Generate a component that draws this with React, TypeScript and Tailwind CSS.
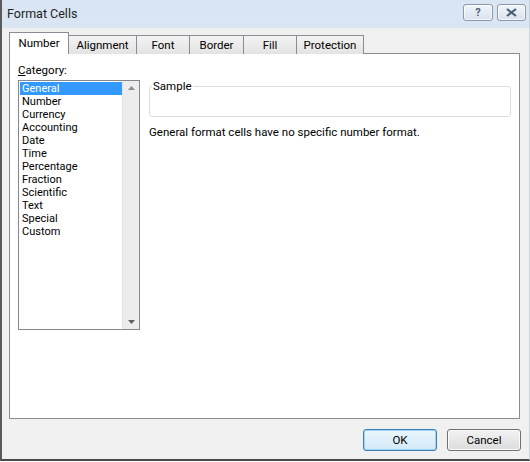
import React from "react";

const items = [
  "General",
  "Number",
  "Currency",
  "Accounting",
  "Date",
  "Time",
  "Percentage",
  "Fraction",
  "Scientific",
  "Text",
  "Special",
  "Custom",
];

const tabs = [
  { label: "Alignment", w: "w-[68px]" },
  { label: "Font", w: "w-[53px]" },
  { label: "Border", w: "w-[54px]" },
  { label: "Fill", w: "w-[53px]" },
  { label: "Protection", w: "w-[67px]" },
];

export default function App() {
  return (
    <div className="w-[530px] h-[462px] bg-white font-['Roboto',sans-serif] text-[11.5px] text-black leading-[14px]">
      <div className="w-[530px] h-[461px] flex flex-col border-l-2 border-b-2 border-r border-l-[#5b5b5b] border-b-[#4a4a4a] border-r-[#c9d3de] bg-gradient-to-b from-[#d9e5f3] to-[#e4ecf6]">
        {/* Title bar */}
        <div className="h-[28px] flex items-start justify-between pl-[5px] pr-[3px]">
          <div className="pt-[7px] text-[12.5px] text-[#1e1e1e]">Format Cells</div>
          <div className="flex gap-[4px] pt-[4px]">
            <div className="w-[30px] h-[17px] rounded-[3px] border border-[#8a99ad] bg-gradient-to-b from-[#f1f5fa] to-[#d8e2ee] flex items-center justify-center shadow-[inset_0_0_0_1px_rgba(255,255,255,0.7)]">
              <span className="text-[11px] font-bold text-[#4c5f78] leading-none">?</span>
            </div>
            <div className="w-[29px] h-[17px] rounded-[3px] border border-[#8a99ad] bg-gradient-to-b from-[#f1f5fa] to-[#d8e2ee] flex items-center justify-center shadow-[inset_0_0_0_1px_rgba(255,255,255,0.7)]">
              <svg width="11" height="9" viewBox="0 0 11 9">
                <path d="M1 1 L10 8 M10 1 L1 8" stroke="#4c5f78" strokeWidth="2.2" fill="none" />
              </svg>
            </div>
          </div>
        </div>

        {/* Client area */}
        <div className="flex-1 bg-[#f0f0f0] flex flex-col pl-[7px] pt-[4px]">
          {/* Tabs */}
          <div className="flex items-end h-[22px] relative z-10">
            <div className="w-[60px] h-[22px] bg-white border border-b-0 border-[#898c95] flex items-start justify-center pt-[3px]">
              Number
            </div>
            {tabs.map((t) => (
              <div
                key={t.label}
                className={`${t.w} h-[19px] border border-l-0 border-b-0 border-[#898c95] bg-gradient-to-b from-[#f3f3f3] to-[#e3e3e3] flex items-start justify-center pt-[2px]`}
              >
                {t.label}
              </div>
            ))}
          </div>

          {/* Tab panel */}
          <div className="w-[511px] h-[366px] -mt-px bg-white border border-[#898c95] flex pl-[8px] pt-[9px]">
            <div className="flex flex-col w-[122px]">
              <div className="h-[14px]">
                <span className="underline">C</span>ategory:
              </div>
              <div className="mt-[3px] h-[250px] border border-[#828790] flex">
                <div className="flex-1 flex flex-col pt-[1px] pl-[1px]">
                  {items.map((it, i) => (
                    <div
                      key={it}
                      className={`h-[13px] leading-[13px] pl-[2px] text-[11px] ${
                        i === 0 ? "bg-[#3399ff] text-white" : ""
                      }`}
                    >
                      {it}
                    </div>
                  ))}
                </div>
                <div className="w-[17px] bg-[#ececec] border-l border-[#e3e3e3] flex flex-col justify-between items-center py-[5px]">
                  <svg width="7" height="4" viewBox="0 0 7 4">
                    <path d="M0 4 L3.5 0 L7 4 Z" fill="#8e8e8e" />
                  </svg>
                  <svg width="7" height="4" viewBox="0 0 7 4">
                    <path d="M0 0 L3.5 4 L7 0 Z" fill="#606060" />
                  </svg>
                </div>
              </div>
            </div>

            <div className="ml-[9px] flex flex-col">
              <fieldset className="w-[362px] h-[38px] mt-[16px] border border-[#dcdcdc] rounded-[3px] pl-[2px]">
                <legend className="px-[1px] leading-[14px]">Sample</legend>
              </fieldset>
              <div className="mt-[8px]">
                General format cells have no specific number format.
              </div>
            </div>
          </div>

          {/* Buttons */}
          <div className="flex justify-end gap-[10px] pr-[8px] mt-[10px]">
            <div className="w-[74px] h-[22px] rounded-[3px] border border-[#3c7fb1] bg-gradient-to-b from-[#eaf6fd] to-[#d3e9f7] shadow-[inset_0_0_0_1px_#9ed6f6] flex items-center justify-center">
              OK
            </div>
            <div className="w-[74px] h-[22px] rounded-[3px] border border-[#707070] bg-gradient-to-b from-[#f2f2f2] to-[#dcdcdc] shadow-[inset_0_0_0_1px_#fbfbfb] flex items-center justify-center">
              Cancel
            </div>
          </div>
        </div>
      </div>
    </div>
  );
}
